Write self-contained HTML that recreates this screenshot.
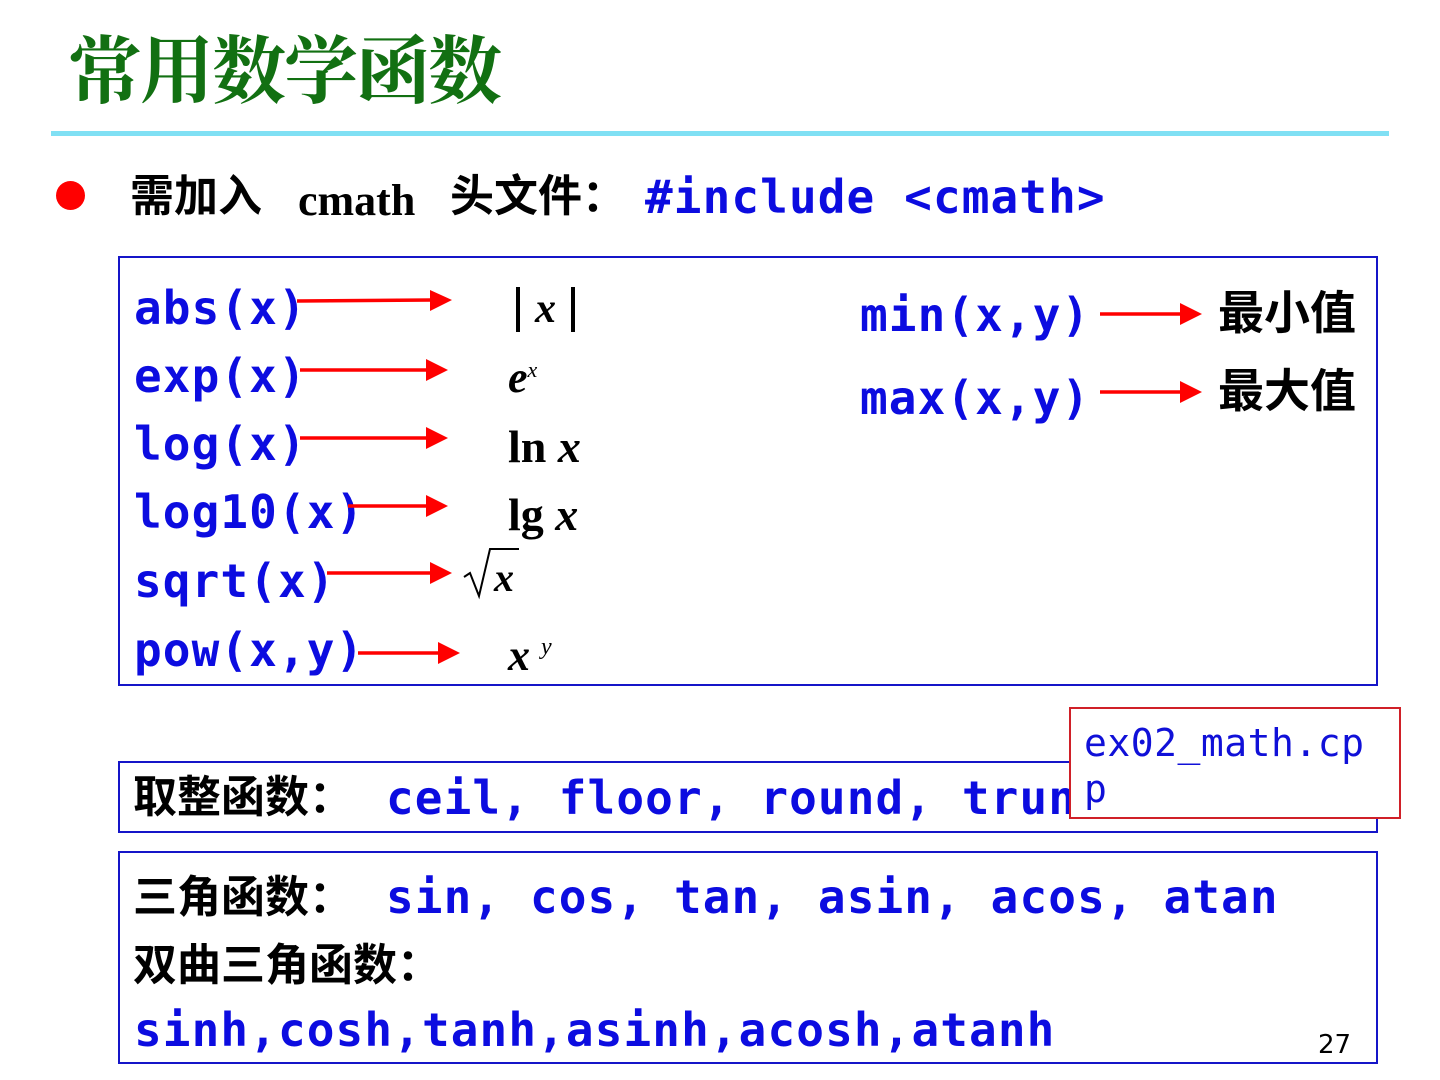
<!DOCTYPE html>
<html><head><meta charset="utf-8"><style>
body{margin:0;width:1440px;height:1080px;background:#fff;position:relative;overflow:hidden}
.a{position:absolute;white-space:pre;line-height:1}
.m{font-family:"DejaVu Sans Mono","Liberation Mono",monospace;font-weight:bold;color:#0c0ce0;font-size:46px;letter-spacing:1.1px}
.c{font-family:"Liberation Sans","Noto Sans CJK SC",sans-serif;font-weight:bold;color:#000;font-size:44px}
.s{font-family:"Liberation Serif",serif;font-weight:bold;color:#000}
.box{position:absolute;border:2px solid #1515c8;box-sizing:border-box}
</style></head><body>
<div class="a" style="left:68px;top:29px;font-family:'Noto Serif CJK SC','Noto Sans CJK SC',serif;font-size:74px;color:#127012;font-weight:bold;letter-spacing:-2px">常用数学函数</div>
<div style="position:absolute;left:51px;top:131px;width:1338px;height:5px;background:#80e0f4"></div>
<div style="position:absolute;left:56px;top:181px;width:29px;height:29px;border-radius:50%;background:#f00"></div>
<div class="a c" style="left:130px;top:175px">需加入</div>
<div class="a s" style="left:298px;top:179px;font-size:44px">cmath</div>
<div class="a c" style="left:450px;top:175px">头文件：</div>
<div class="a m" style="left:645px;top:174px">#include &lt;cmath&gt;</div>

<div class="box" style="left:118px;top:256px;width:1260px;height:430px"></div>
<div class="a m" style="left:134px;top:285px">abs(x)</div>
<div class="a m" style="left:134px;top:353px">exp(x)</div>
<div class="a m" style="left:134px;top:421px">log(x)</div>
<div class="a m" style="left:134px;top:489px">log10(x)</div>
<div class="a m" style="left:134px;top:558px">sqrt(x)</div>
<div class="a m" style="left:134px;top:627px">pow(x,y)</div>
<div class="a m" style="left:860px;top:292px">min(x,y)</div>
<div class="a m" style="left:860px;top:375px">max(x,y)</div>
<div class="a c" style="left:1218px;top:290px;font-size:46px">最小值</div>
<div class="a c" style="left:1218px;top:368px;font-size:46px">最大值</div>

<svg style="position:absolute;left:0;top:0" width="1440" height="1080">
<g stroke="#f00" stroke-width="3.5" fill="#f00">
<line x1="297" y1="301" x2="432" y2="300"/><polygon points="430,290 452,300 430,311" stroke="none"/>
<line x1="300" y1="370" x2="428" y2="370"/><polygon points="426,359 448,370 426,381" stroke="none"/>
<line x1="300" y1="438" x2="428" y2="438"/><polygon points="426,427 448,438 426,449" stroke="none"/>
<line x1="348" y1="506" x2="428" y2="506"/><polygon points="426,495 448,506 426,517" stroke="none"/>
<line x1="327" y1="573" x2="432" y2="573"/><polygon points="430,562 452,573 430,584" stroke="none"/>
<line x1="358" y1="653" x2="440" y2="653"/><polygon points="438,642 460,653 438,664" stroke="none"/>
<line x1="1100" y1="314" x2="1182" y2="314"/><polygon points="1180,303 1202,314 1180,325" stroke="none"/>
<line x1="1100" y1="392" x2="1182" y2="392"/><polygon points="1180,381 1202,392 1180,403" stroke="none"/>
</g>
<rect x="516" y="287" width="4" height="45" fill="#000"/>
<rect x="571" y="287" width="4" height="45" fill="#000"/>
<path d="M464 577 L470 573 L479 596 L490 549 L519 549" stroke="#000" stroke-width="2" fill="none"/>
</svg>
<div class="a s" style="left:535px;top:288px;font-size:42px"><i>x</i></div>
<div class="a s" style="left:508px;top:356px;font-size:44px"><i>e</i><sup style="font-size:22px;font-weight:normal;vertical-align:15px"><i>x</i></sup></div>
<div class="a s" style="left:508px;top:424px;font-size:46px">ln <i>x</i></div>
<div class="a s" style="left:508px;top:492px;font-size:46px">lg <i>x</i></div>
<div class="a s" style="left:494px;top:558px;font-size:40px"><i>x</i></div>
<div class="a s" style="left:508px;top:634px;font-size:44px"><i>x</i> <sup style="font-size:24px;font-weight:normal;vertical-align:16px"><i>y</i></sup></div>

<div class="box" style="left:118px;top:761px;width:1260px;height:72px"></div>
<div class="a c" style="left:133px;top:776px">取整函数：</div>
<div class="a m" style="left:386px;top:775px">ceil, floor, round, trunc</div>
<div style="position:absolute;left:1069px;top:707px;width:332px;height:112px;border:2px solid #d02028;background:#fff;box-sizing:border-box"></div>
<div class="a" style="left:1084px;top:720px;font-family:'DejaVu Sans Mono',monospace;font-size:38px;color:#1010d8;line-height:46px;letter-spacing:0.5px">ex02_math.cp<br>p</div>

<div class="box" style="left:118px;top:851px;width:1260px;height:213px"></div>
<div class="a c" style="left:133px;top:876px">三角函数：</div>
<div class="a m" style="left:386px;top:874px">sin, cos, tan, asin, acos, atan</div>
<div class="a c" style="left:133px;top:944px">双曲三角函数：</div>
<div class="a m" style="left:134px;top:1007px">sinh,cosh,tanh,asinh,acosh,atanh</div>
<div class="a" style="left:1318px;top:1032px;font-family:'DejaVu Sans','Liberation Sans',sans-serif;font-size:26px;color:#000">27</div>
</body></html>
